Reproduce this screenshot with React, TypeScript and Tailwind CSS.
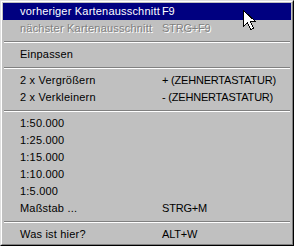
import React from 'react'

type Item = { label: string; key?: string; active?: boolean; disabled?: boolean } | 'sep'

const items: Item[] = [
  { label: 'vorheriger Kartenausschnitt', key: 'F9', active: true },
  { label: 'nächster Kartenausschnitt', key: 'STRG+F9', disabled: true },
  'sep',
  { label: 'Einpassen' },
  'sep',
  { label: '2 x Vergrößern', key: '+ (ZEHNERTASTATUR)' },
  { label: '2 x Verkleinern', key: '- (ZEHNERTASTATUR)' },
  'sep',
  { label: '1:50.000' },
  { label: '1:25.000' },
  { label: '1:15.000' },
  { label: '1:10.000' },
  { label: '1:5.000' },
  { label: 'Maßstab ...', key: 'STRG+M' },
  'sep',
  { label: 'Was ist hier?', key: 'ALT+W' },
]

function Cursor() {
  return (
    <svg
      className="absolute left-[243px] top-[10px]"
      width="14"
      height="22"
      viewBox="0 0 14 22"
      shapeRendering="crispEdges"
    >
      <polygon
        points="0.5,0.5 0.5,16.5 4.5,12.5 7.5,19.5 10.5,18.5 7.5,11.5 12.5,11.5"
        fill="#ffffff"
        stroke="#000000"
        strokeWidth="1"
      />
    </svg>
  )
}

export default function App() {
  return (
    <div className="relative w-[294px] h-[246px] bg-[#c0c0c0] font-['Liberation_Sans',Arial,sans-serif] text-black">
      <div className="w-full h-full border border-t-[#dfdfdf] border-l-[#dfdfdf] border-r-black border-b-black">
        <div className="w-full h-full border border-t-white border-l-white border-r-[#808080] border-b-[#808080] p-px">
          {items.map((it, i) =>
            it === 'sep' ? (
              <div key={i} className="h-[9px] flex flex-col justify-center mx-px">
                <div className="h-px bg-[#808080]" />
                <div className="h-px bg-white" />
              </div>
            ) : (
              <div
                key={i}
                className={
                  'flex h-[17px] items-center pl-[17px] whitespace-nowrap leading-[17px] ' +
                  (it.active ? 'bg-[#000080] text-white' : '') +
                  (it.disabled ? 'text-[#808080] [text-shadow:1px_1px_0_#ffffff]' : '')
                }
              >
                <span className="w-[142px] shrink-0 text-[11px] tracking-[0.2px]">{it.label}</span>
                {it.key && <span className="text-[11px] tracking-[-0.2px]">{it.key}</span>}
              </div>
            )
          )}
        </div>
      </div>
      <Cursor />
    </div>
  )
}
